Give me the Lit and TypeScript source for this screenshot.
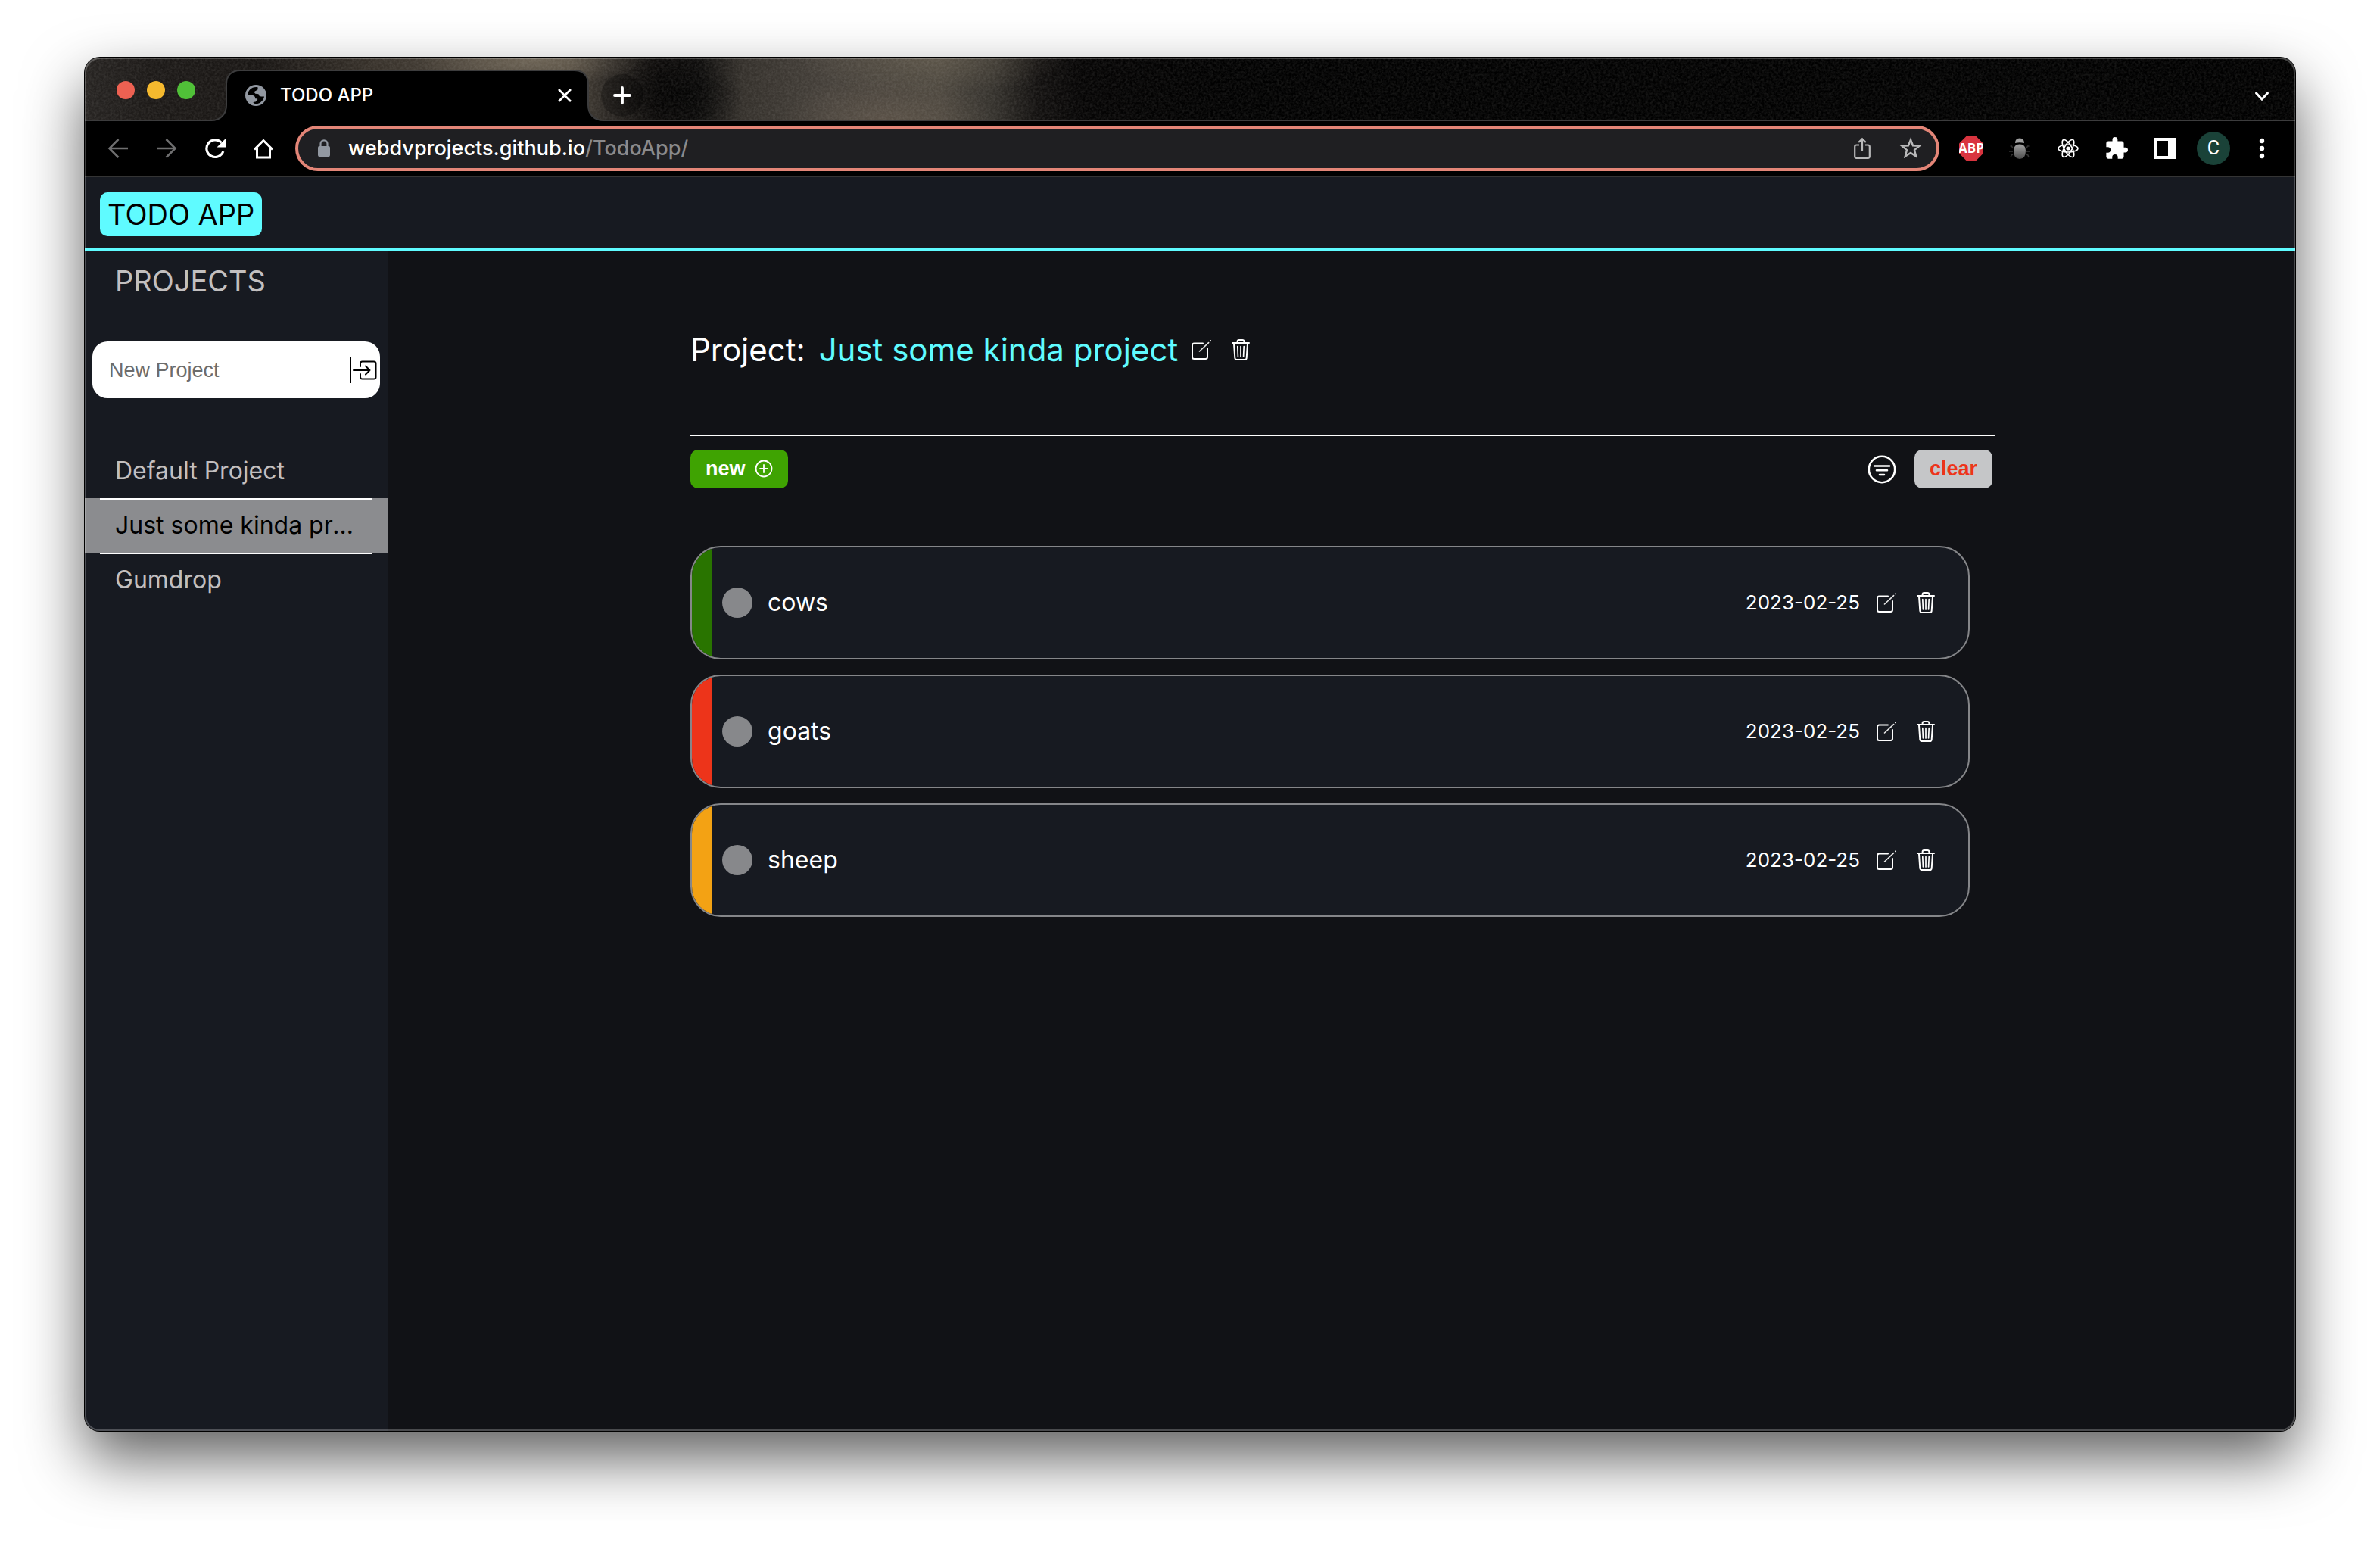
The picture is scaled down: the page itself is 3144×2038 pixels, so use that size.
import { LitElement, html, css, svg } from "lit";
import { customElement, state } from "lit/decorators.js";
import { classMap } from "lit/directives/class-map.js";

interface Task {
  name: string;
  due: string;
  priority: "low" | "high" | "medium";
}

const editIcon = html`<svg class="icon" width="26" height="28" viewBox="0 0 26 28" fill="none" stroke="#fff" stroke-width="2" stroke-linecap="round" aria-hidden="true">
  <path d="M15 5.5H3.5Q1 5.5 1 8V23.5Q1 26 3.5 26H18.5Q21 26 21 23.5V12" />
  <path d="M10.5 16 22.6 4.6M24.8 2.4l.6-.6" stroke="#e8e8e8" stroke-width="1.6" />
</svg>`;

const trashIcon = html`<svg class="icon" width="26" height="28" viewBox="0 0 26 28" fill="none" stroke="#fff" stroke-width="2" stroke-linecap="round" aria-hidden="true">
  <path d="M2 5h22M8.6 5V3.2Q8.6 1 10.8 1h4.4q2.2 0 2.2 2.2V5M4 6l1.3 18.8Q5.5 27 7.6 27h10.8q2.1 0 2.3-2.2L22 6" />
  <path d="M8.8 9.5l.6 13.5M13 9.5V23M17.2 9.5L16.6 23" stroke-width="1.7" />
</svg>`;

@customElement("browser-chrome")
export class BrowserChrome extends LitElement {
  static styles = css`
    :host {
      display: block;
      font-family: Inter, "Liberation Sans", sans-serif;
      color: #fff;
    }
    button {
      display: flex;
      align-items: center;
      justify-content: center;
      padding: 0;
      border: 0;
      background: none;
      color: inherit;
      font: inherit;
    }
    .strip {
      position: relative;
      display: flex;
      align-items: flex-end;
      height: 84px;
      box-sizing: border-box;
      padding: 0 34px 0 42px;
      background:
        linear-gradient(#3c3c3d, #3c3c3d) bottom / 100% 2px no-repeat,
        radial-gradient(ellipse 90px 50px at 780px 50px, rgba(0, 0, 0, 0.75), transparent),
        radial-gradient(ellipse 150px 34px at 590px 4px, rgba(118, 108, 92, 0.75), transparent),
        radial-gradient(ellipse 140px 60px at 1060px 84px, rgba(112, 98, 84, 0.45), transparent),
        radial-gradient(ellipse 180px 50px at 1120px 0, rgba(120, 110, 92, 0.4), transparent),
        linear-gradient(90deg, #272422 0, #1d1a18 90px, #191614 230px, #37312a 380px, #4b443b 520px, #4d463c 640px, #2c2824 690px, #0d0b0a 760px, #0f0e0d 810px, #35312c 870px, #45403a 980px, #4a453d 1130px, #35322d 1200px, #12100f 1260px, #050404 1320px, #010101 1500px, #010101 100%);
    }
    .grain {
      position: absolute;
      inset: 0 0 2px 0;
      width: 100%;
      height: 82px;
      opacity: 0.09;
    }
    .lights {
      position: relative;
      display: flex;
      gap: 16px;
      padding-bottom: 29px;
      margin-right: 41px;
    }
    .light {
      width: 24px;
      height: 24px;
      border-radius: 50%;
    }
    .close { background: #ed6152; }
    .minimise { background: #f5b92e; }
    .zoom { background: #50c038; }
    .tab {
      position: relative;
      display: flex;
      align-items: center;
      gap: 18px;
      width: 478px;
      height: 68px;
      box-sizing: border-box;
      padding: 0 21px 0 25px;
      font-size: 24px;
      line-height: 32px;
      font-weight: 500;
    }
    .tab-shape {
      position: absolute;
      left: -20px;
      top: 0;
    }
    .tab-icon, .tab-title, .tab-close { position: relative; }
    .tab-title { flex: 1; }
    .plus {
      position: relative;
      width: 56px;
      height: 56px;
      margin: 0 auto 6px 17px;
      border-radius: 50%;
      background: rgba(0, 0, 0, 0.25);
    }
    .chevron {
      position: relative;
      height: 66px;
    }
    .toolbar {
      display: flex;
      align-items: center;
      gap: 20px;
      height: 74px;
      box-sizing: border-box;
      padding: 0 22px;
      background: #000;
      border-bottom: 2px solid #343434;
    }
    .slot {
      flex: none;
      width: 44px;
      height: 44px;
    }
    .address {
      flex: 1;
      display: flex;
      align-items: center;
      gap: 22px;
      height: 60px;
      box-sizing: border-box;
      padding: 0 12px 0 24px;
      border: 4px solid #e38577;
      border-radius: 30px;
      background: #1f1f22;
      font-size: 27px;
      line-height: 36px;
      font-weight: 500;
    }
    .address .slot + .slot { margin-left: -2px; }
    .url {
      flex: 1;
      color: #8a8a8c;
      outline: none;
    }
    .host { color: #fff; }
    .abp {
      font: 700 17px/20px "Open Sans", sans-serif;
    }
    .avatar {
      border-radius: 50%;
      background: #1a4238;
      font-family: Roboto, sans-serif;
      font-size: 25px;
      line-height: 44px;
    }
  `;

  render() {
    return html`
      <div class="strip">
        <svg class="grain" aria-hidden="true">
          <filter id="grain">
            <feTurbulence type="fractalNoise" baseFrequency="0.32" numOctaves="3" seed="4" />
            <feColorMatrix values="0 0 0 0 .7  0 0 0 0 .68  0 0 0 0 .64  1.8 1.2 0 0 -1.1" />
          </filter>
          <rect width="100%" height="100%" filter="url(#grain)" />
        </svg>
        <div class="lights">
          <button class="light close" aria-label="Close window"></button>
          <button class="light minimise" aria-label="Minimise window"></button>
          <button class="light zoom" aria-label="Zoom window"></button>
        </div>
        <div class="tab">
          <svg class="tab-shape" width="518" height="68" viewBox="0 0 518 68" aria-hidden="true">
            <path d="M0 67C12 67 20 59 20 47V19C20 8 27 1 38 1H480C491 1 498 8 498 19V47C498 59 506 67 518 67V68H0Z" fill="#000" />
            <path d="M0 67C12 67 20 59 20 47V19C20 8 27 1 38 1H480C491 1 498 8 498 19V47C498 59 506 67 518 67" fill="none" stroke="#3c3c3d" stroke-width="2" />
          </svg>
          <svg class="tab-icon" width="28" height="28" viewBox="0 0 28 28" aria-hidden="true">
            <circle cx="14" cy="14" r="14" fill="#9298a1" />
            <path d="M16.5 3.2C12.5 2.6 8.6 3.8 6 6.4 4.2 8.3 3.2 10.7 3 13.3L9.5 13.8Q12.6 14.4 13 16.6L13.2 18.2H16Q16.6 19.4 15.6 20.8L13.5 22.4Q10.5 22.4 10.4 23.6L13 25.2Q19 25.4 22.5 21 24.8 18.2 25 15.5L21.5 15.6Q18.5 15.8 17.8 13.5L17.6 12.2 13.4 11.8Q11.4 10.6 12.4 8.8L14.6 7.6Q16.8 7.4 16.6 5Z" fill="#000" />
          </svg>
          <span class="tab-title">TODO APP</span>
          <button class="tab-close" aria-label="Close tab">
            <svg width="20" height="20" viewBox="0 0 20 20" stroke="#fff" stroke-width="2.6" aria-hidden="true"><path d="M2 2 18 18M18 2 2 18" /></svg>
          </button>
        </div>
        <button class="plus" aria-label="New tab">
          <svg width="24" height="24" viewBox="0 0 24 24" stroke="#fff" stroke-width="3.8" stroke-linecap="round" aria-hidden="true"><path d="M12 2V22M2 12H22" /></svg>
        </button>
        <button class="chevron" aria-label="Search tabs">
          <svg width="20" height="14" viewBox="0 0 20 14" fill="none" stroke="#fff" stroke-width="3" stroke-linecap="round" aria-hidden="true"><path d="M2.5 3 10 11 17.5 3" /></svg>
        </button>
      </div>
      <div class="toolbar">
        <button class="slot" aria-label="Back">
          <svg width="28" height="28" viewBox="0 0 28 28" fill="none" stroke="#6f6f70" stroke-width="2.6" aria-hidden="true"><path d="M27 14H3M14.5 2 2.5 14 14.5 26" /></svg>
        </button>
        <button class="slot" aria-label="Forward">
          <svg width="28" height="28" viewBox="0 0 28 28" fill="none" stroke="#6f6f70" stroke-width="2.6" aria-hidden="true"><path d="M1 14H25M13.5 2 25.5 14 13.5 26" /></svg>
        </button>
        <button class="slot" aria-label="Reload">
          <svg width="28" height="28" viewBox="0 0 28 28" fill="none" aria-hidden="true"><path d="M22.5 6.5A11.3 11.3 0 1 0 24.8 18" stroke="#fff" stroke-width="3.2" /><path d="M28 1V12.5H16.5Z" fill="#fff" /></svg>
        </button>
        <button class="slot" aria-label="Home">
          <svg width="28" height="28" viewBox="0 0 28 28" fill="none" stroke="#fff" stroke-width="3" aria-hidden="true"><path d="M2 15.5 14 3.5 26 15.5M5.5 13V26H22.5V13" /></svg>
        </button>
        <div class="address">
          <svg width="20" height="24" viewBox="0 0 20 24" aria-hidden="true"><path d="M5.5 10V5.8a4.5 4.5 0 0 1 9 0V10" fill="none" stroke="#9298a1" stroke-width="2.2" /><rect x="2" y="9" width="16" height="14" rx="2" fill="#9298a1" /></svg>
          <div class="url" role="textbox" aria-label="Address" tabindex="0"><span class="host">webdvprojects.github.io</span>/TodoApp/</div>
          <button class="slot" aria-label="Share">
            <svg width="24" height="30" viewBox="0 0 24 30" fill="none" stroke="#b9b9ba" stroke-width="2.2" aria-hidden="true"><path d="M8 10.5H4.5Q2.2 10.5 2.2 12.8V25.5Q2.2 27.8 4.5 27.8H19.5Q21.8 27.8 21.8 25.5V12.8Q21.8 10.5 19.5 10.5H16M12 19V2.5M7.2 7 12 2.2 16.8 7" /></svg>
          </button>
          <button class="slot" aria-label="Bookmark">
            <svg width="30" height="30" viewBox="0 0 30 30" fill="none" stroke="#b9b9ba" stroke-width="2.4" aria-hidden="true"><path d="M15 3.5 18 11.3 26.5 11.8 20 17.2 22.2 25.6 15 21 7.8 25.6 10 17.2 3.5 11.8 12 11.3Z" /></svg>
          </button>
        </div>
        <button class="slot" aria-label="Ad blocker">
          <svg width="32" height="32" viewBox="0 0 32 32" aria-hidden="true"><path d="M9.4 0H22.6L32 9.4V22.6L22.6 32H9.4L0 22.6V9.4Z" fill="#d9343f" /><text class="abp" x="16" y="22" text-anchor="middle" fill="#fff">ABP</text></svg>
        </button>
        <button class="slot" aria-label="Bug extension">
          <svg width="28" height="28" viewBox="0 0 28 28" aria-hidden="true">
            <defs><linearGradient id="bug" x1="0" y1="0" x2="0" y2="1"><stop offset="0" stop-color="#a2a2a2" /><stop offset="1" stop-color="#4c4c4c" /></linearGradient></defs>
            <path d="M8 7Q8 .5 14 .5T20 7Q14 5.5 8 7Z" fill="#a0a0a0" />
            <path d="M6 17Q6 8.5 14 8.5T22 17Q22 28 14 28T6 17Z" fill="url(#bug)" />
            <path d="M5 14 3.5 11H1.5M5 18H0M5 22 3 23 2 26M23 14 24.5 11H26.5M23 18H28M23 22 25 23 26 26" fill="none" stroke="#333" stroke-width="1.5" />
          </svg>
        </button>
        <button class="slot" aria-label="React developer tools">
          <svg width="28" height="28" viewBox="0 0 28 28" fill="none" stroke="#fff" stroke-width="1.6" aria-hidden="true">
            ${[0, 60, 120].map((a) => svg`<ellipse cx="14" cy="14" rx="13" ry="5" transform="rotate(${a} 14 14)" />`)}
            <circle cx="14" cy="14" r="2.6" fill="#fff" stroke="none" />
          </svg>
        </button>
        <button class="slot" aria-label="Extensions">
          <svg width="30" height="30" viewBox="1 1 22 22" fill="#fff" aria-hidden="true"><path d="M20.5 11H19V7c0-1.1-.9-2-2-2h-4V3.5a2.5 2.5 0 0 0-5 0V5H4c-1.1 0-2 .9-2 2v3.8h1.5a2.7 2.7 0 0 1 0 5.4H2V20c0 1.1.9 2 2 2h3.8v-1.5a2.7 2.7 0 0 1 5.4 0V22H17c1.1 0 2-.9 2-2v-4h1.5a2.5 2.5 0 0 0 0-5Z" /></svg>
        </button>
        <button class="slot" aria-label="Side panel">
          <svg width="28" height="28" viewBox="0 0 28 28" aria-hidden="true"><path d="M0 0H28V28H0ZM4 4V24H18V4Z" fill="#fff" fill-rule="evenodd" /></svg>
        </button>
        <button class="slot avatar" aria-label="Profile C">C</button>
        <button class="slot" aria-label="Menu">
          <svg width="8" height="28" viewBox="0 0 8 28" fill="#fff" aria-hidden="true"><circle cx="4" cy="4" r="3.2" /><circle cx="4" cy="14" r="3.2" /><circle cx="4" cy="24" r="3.2" /></svg>
        </button>
      </div>
    `;
  }
}

@customElement("task-card")
export class TaskCard extends LitElement {
  static properties = { task: { attribute: false } };
  declare task: Task;

  static styles = css`
    :host { display: block; }
    .card {
      display: flex;
      align-items: center;
      height: 150px;
      box-sizing: border-box;
      padding-right: 43px;
      overflow: hidden;
      border: 2px solid #858689;
      border-radius: 40px;
      background: #171a21;
      color: #fff;
    }
    .priority {
      align-self: stretch;
      width: 26px;
      margin-right: 14px;
    }
    .low { background: #297400; }
    .high { background: #ed341a; }
    .medium { background: #f3a214; }
    .check {
      appearance: none;
      width: 40px;
      height: 40px;
      margin: 0 20px 0 0;
      border-radius: 50%;
      background: #87888b;
    }
    .name {
      flex: 1;
      font-size: 32px;
      line-height: 40px;
    }
    .due {
      margin-right: 22px;
      font-size: 26px;
      line-height: 32px;
    }
    .action {
      display: flex;
      padding: 0;
      border: 0;
      background: none;
    }
    .action + .action { margin-left: 26px; }
  `;

  render() {
    const { name, due, priority } = this.task;
    return html`
      <div class="card">
        <div class=${classMap({ priority: true, [priority]: true })}></div>
        <input class="check" type="checkbox" id="done" />
        <label class="name" for="done">${name}</label>
        <time class="due" datetime=${due}>${due}</time>
        <button class="action" aria-label="Edit task">${editIcon}</button>
        <button class="action" aria-label="Delete task">${trashIcon}</button>
      </div>
    `;
  }
}

@customElement("app-root")
export class AppRoot extends LitElement {
  static styles = css`
    :host {
      display: block;
      box-sizing: border-box;
      min-height: 100vh;
      padding: 76px 112px 148px;
      background: #fff;
      font-family: Inter, "Liberation Sans", sans-serif;
    }
    .window {
      position: relative;
      display: flex;
      flex-direction: column;
      min-height: calc(100vh - 224px);
      overflow: hidden;
      border-radius: 20px;
      background: #111216;
    }
    .shadow {
      border-radius: 20px;
      box-shadow: 0 0 0 1px #000, 0 36px 80px rgba(0, 0, 0, 0.63);
    }
    .window::after {
      content: "";
      position: absolute;
      inset: 0;
      border: 2px solid rgba(255, 255, 255, 0.24);
      border-radius: 20px;
      pointer-events: none;
    }
    .header {
      padding: 20px 20px 16px;
      border-bottom: 4px solid #5ffbff;
      background: #171a21;
    }
    .brand {
      display: inline-block;
      margin: 0;
      padding: 5px 10px;
      border-radius: 10px;
      background: #5ffbff;
      color: #000;
      font-size: 38px;
      line-height: 48px;
      font-weight: 400;
      vertical-align: top;
    }
    .body {
      flex: 1;
      display: flex;
    }
    .sidebar {
      width: 400px;
      flex: none;
      background: #171a21;
      color: #c2bfbf;
    }
    .side-title {
      margin: 0;
      padding: 15px 40px 56px;
      font-size: 38px;
      line-height: 48px;
      font-weight: 400;
    }
    .new-project {
      display: flex;
      align-items: center;
      gap: 4px;
      height: 75px;
      box-sizing: border-box;
      margin: 0 10px 60px;
      padding: 0 4px 0 22px;
      border-radius: 20px;
      background: #fff;
    }
    .field {
      flex: 1;
      min-width: 0;
      padding: 0;
      border: 0;
      outline: none;
      background: none;
      font: 27px/32px "Liberation Sans", Arial, sans-serif;
    }
    .field::placeholder { color: #6c6c6c; }
    .submit {
      display: flex;
      padding: 0 0 0 2px;
      border: 0;
      border-left: 2px solid #000;
      height: 34px;
      align-items: center;
      background: none;
    }
    .projects {
      margin: 0;
      padding: 0;
      list-style: none;
    }
    .project {
      display: block;
      width: 100%;
      height: 72px;
      padding: 0 40px;
      border: 0;
      overflow: hidden;
      background: none;
      color: inherit;
      font: 400 32px/72px Inter, sans-serif;
      text-align: left;
      text-overflow: ellipsis;
      white-space: nowrap;
    }
    .selected {
      background: #8b8c8f;
      color: #000;
    }
    .divided {
      background-image: linear-gradient(#fff, #fff);
      background-position: 20px 0;
      background-size: calc(100% - 40px) 2px;
      background-repeat: no-repeat;
    }
    .main {
      flex: 1;
      min-width: 0;
      padding: 104px 396px 0 400px;
      color: #fff;
    }
    .title-row {
      display: flex;
      align-items: center;
      padding-bottom: 86px;
      border-bottom: 2px solid #fff;
    }
    .title {
      display: flex;
      gap: 18px;
      margin: 0 18px 0 0;
      font-size: 42px;
      line-height: 52px;
      font-weight: 400;
    }
    .current { color: #5ffbff; }
    .action {
      display: flex;
      align-items: center;
      padding: 0;
      border: 0;
      background: none;
    }
    .action + .action { margin-left: 26px; }
    .tools {
      display: flex;
      align-items: center;
      justify-content: space-between;
      padding: 18px 4px 76px 0;
    }
    .group {
      display: flex;
      align-items: center;
      gap: 24px;
    }
    .pill {
      display: flex;
      align-items: center;
      gap: 12px;
      padding: 9px 20px 10px;
      border: 0;
      border-radius: 10px;
      font: 700 27px/32px "Liberation Sans", Arial, sans-serif;
    }
    .add {
      background: #3fa302;
      color: #fff;
    }
    .clear {
      background: #c5c6c8;
      color: #ed341a;
    }
    .tasks {
      display: grid;
      gap: 20px;
      margin: 0 34px 40px 0;
      padding: 0;
      list-style: none;
    }
  `;

  @state() private projects = ["Default Project", "Just some kinda project", "Gumdrop"];
  @state() private selected = 1;

  private tasks: Task[] = [
    { name: "cows", due: "2023-02-25", priority: "low" },
    { name: "goats", due: "2023-02-25", priority: "high" },
    { name: "sheep", due: "2023-02-25", priority: "medium" },
  ];

  private addProject(e: Event) {
    e.preventDefault();
    const field = this.renderRoot.querySelector<HTMLInputElement>(".field")!;
    if (field.value.trim()) this.projects = [...this.projects, field.value.trim()];
    field.value = "";
  }

  render() {
    return html`
      <div class="shadow">
        <div class="window">
          <browser-chrome></browser-chrome>
          <header class="header"><h1 class="brand">TODO APP</h1></header>
          <div class="body">
            <nav class="sidebar" aria-label="Projects">
              <h2 class="side-title">PROJECTS</h2>
              <form class="new-project" @submit=${this.addProject}>
                <input class="field" type="text" placeholder="New Project" aria-label="New Project" />
                <button class="submit" aria-label="Add project">
                  <svg width="32" height="26" viewBox="0 0 32 26" fill="none" stroke="#000" stroke-width="2" stroke-linecap="round" stroke-linejoin="round" aria-hidden="true">
                    <path d="M10 8V4Q10 1.5 12.5 1.5H28Q30.5 1.5 30.5 4V22Q30.5 24.5 28 24.5H12.5Q10 24.5 10 22V18" />
                    <path d="M1 13H22.5M17 7.5 22.5 13 17 18.5" />
                  </svg>
                </button>
              </form>
              <ul class="projects">
                ${this.projects.map(
                  (p, i) => html`<li>
                    <button
                      class=${classMap({ project: true, divided: i > 0, selected: i === this.selected })}
                      @click=${() => (this.selected = i)}
                    >${p}</button>
                  </li>`
                )}
              </ul>
            </nav>
            <main class="main">
              <div class="title-row">
                <h2 class="title"><span>Project:</span><span class="current">${this.projects[this.selected]}</span></h2>
                <button class="action" aria-label="Edit project">${editIcon}</button>
                <button class="action" aria-label="Delete project">${trashIcon}</button>
              </div>
              <div class="tools">
                <button class="pill add">new
                  <svg width="24" height="24" viewBox="0 0 24 24" fill="none" stroke="#fff" stroke-width="1.8" stroke-linecap="round" aria-hidden="true"><circle cx="12" cy="12" r="10.5" /><path d="M12 7V17M7 12H17" /></svg>
                </button>
                <div class="group">
                  <button class="action" aria-label="Filter tasks">
                    <svg width="38" height="38" viewBox="0 0 38 38" fill="none" stroke="#fff" stroke-width="2.6" stroke-linecap="round" aria-hidden="true"><circle cx="19" cy="19" r="17.2" /><path d="M9 14.5H29M12 20.2H26M16 26H22" /></svg>
                  </button>
                  <button class="pill clear">clear</button>
                </div>
              </div>
              <ul class="tasks">
                ${this.tasks.map((t) => html`<li><task-card .task=${t}></task-card></li>`)}
              </ul>
            </main>
          </div>
        </div>
      </div>
    `;
  }
}
